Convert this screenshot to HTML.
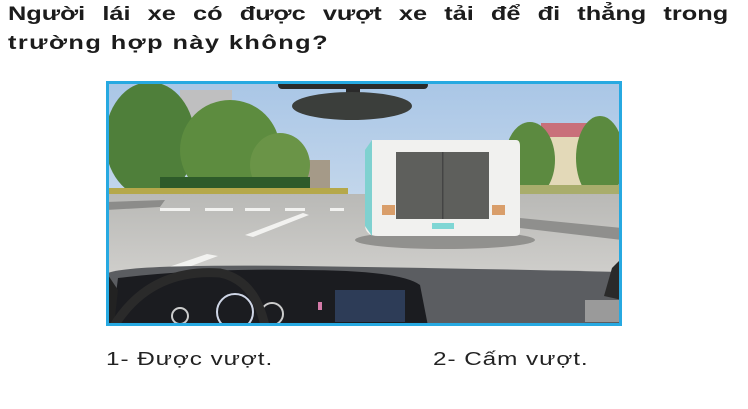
<!DOCTYPE html>
<html><head><meta charset="utf-8"><style>
html,body{margin:0;padding:0;background:#fff;width:748px;height:409px;overflow:hidden;position:relative}
.t{position:absolute;left:8px;font-family:"Liberation Sans",sans-serif;font-weight:bold;font-size:19.5px;color:#1c1c1c;white-space:nowrap;transform:scaleX(1.3);transform-origin:0 0}
.l1{top:3px;width:554px;text-align:justify;text-align-last:justify;white-space:normal}
.l2{top:32px;letter-spacing:1.1px}
.o{position:absolute;top:349px;font-family:"Liberation Sans",sans-serif;font-size:18px;color:#222;transform:scaleX(1.35);transform-origin:0 0;white-space:nowrap;letter-spacing:0.7px}
svg{position:absolute;left:106px;top:81px}
</style></head><body>
<div class="t l1">Người lái xe có được vượt xe tải để đi thẳng trong</div>
<div class="t l2">trường hợp này không?</div>
<svg width="516" height="245" viewBox="106 81 516 245">
<defs>
<linearGradient id="sky" x1="0" y1="0" x2="0" y2="1"><stop offset="0" stop-color="#a9c6e6"/><stop offset="1" stop-color="#dfe8f1"/></linearGradient>
<linearGradient id="road" x1="0" y1="0" x2="0" y2="1"><stop offset="0" stop-color="#b9b9b6"/><stop offset="1" stop-color="#cfcecb"/></linearGradient>
</defs>
<rect x="106" y="81" width="516" height="245" fill="url(#sky)"/>
<rect x="180" y="90" width="52" height="80" fill="#bfbfc0"/>
<rect x="305" y="160" width="25" height="35" fill="#a59a88"/>
<ellipse cx="150" cy="140" rx="45" ry="58" fill="#4f7f3a"/>
<ellipse cx="230" cy="150" rx="50" ry="50" fill="#5d8c3f"/>
<ellipse cx="280" cy="165" rx="30" ry="32" fill="#6a9447"/>
<rect x="160" y="177" width="150" height="18" fill="#2e5b2a"/>
<rect x="108" y="188" width="240" height="8" fill="#b5a84a"/>
<rect x="545" y="128" width="40" height="62" fill="#e3d9b8"/>
<rect x="541" y="123" width="46" height="14" fill="#c9707a"/>
<ellipse cx="530" cy="160" rx="25" ry="38" fill="#5c8a40"/>
<ellipse cx="600" cy="158" rx="24" ry="42" fill="#5b8a3f"/>
<rect x="510" y="185" width="112" height="10" fill="#a9ad6c"/>
<rect x="106" y="194" width="516" height="80" fill="url(#road)"/>
<polygon points="106,202 165,200 160,207 106,210" fill="#8c8c8a"/>
<polygon points="520,218 622,228 622,240 520,228" fill="#8f8f8d"/>
<g fill="#f2f2f0"><rect x="160" y="208" width="30" height="3"/><rect x="205" y="208" width="28" height="3"/><rect x="245" y="208" width="25" height="3"/><rect x="285" y="208" width="20" height="3"/><rect x="330" y="208" width="14" height="3"/>
<polygon points="245,235 303,213 309,215 253,237"/><polygon points="160,270 207,254 218,256 175,272"/></g>
<ellipse cx="445" cy="240" rx="90" ry="9" fill="#7a7a78" opacity="0.7"/>
<path d="M372 140 L516 140 Q520 140 520 146 L520 232 Q520 236 515 236 L378 236 Q366 236 365 226 L365 160 Z" fill="#f1f1ef"/>
<path d="M365 150 L372 140 L372 236 L365 226Z" fill="#7fd1d0"/>
<rect x="396" y="152" width="93" height="67" fill="#5e5f5c"/>
<rect x="442" y="152" width="1.5" height="67" fill="#444"/>
<rect x="382" y="205" width="13" height="10" fill="#d99e6a"/>
<rect x="492" y="205" width="13" height="10" fill="#d99e6a"/>
<rect x="432" y="223" width="22" height="6" fill="#7fd6d4"/>
<rect x="278" y="81" width="150" height="8" rx="4" fill="#2a2a2a"/>
<rect x="346" y="86" width="14" height="8" fill="#2a2a2a"/>
<ellipse cx="352" cy="106" rx="60" ry="14" fill="#3b3e3b"/>
<path d="M106 274 Q120 264 300 266 Q450 268 622 272 L622 326 L106 326Z" fill="#5b5d61"/>
<path d="M112 326 L118 278 Q200 268 300 270 Q400 270 420 285 L428 326Z" fill="#1b1c20"/>
<path d="M106 326 L106 272 L118 290 L114 326Z" fill="#222"/>
<path d="M612 268 L622 258 L622 300 L604 296Z" fill="#2a2a2a"/>
<circle cx="235" cy="312" r="18" fill="none" stroke="#cfd6e6" stroke-width="2"/>
<circle cx="180" cy="316" r="8" fill="none" stroke="#ccc" stroke-width="2"/>
<circle cx="272" cy="314" r="11" fill="none" stroke="#ccc" stroke-width="2"/>
<rect x="335" y="290" width="70" height="32" fill="#2d3c57"/>
<rect x="318" y="302" width="4" height="8" fill="#d47aa8"/>
<path d="M114 326 Q150 268 220 273 Q255 280 265 326" fill="none" stroke="#2a2a2a" stroke-width="9"/>
<rect x="585" y="300" width="35" height="22" fill="#9a9a9a"/>
<rect x="107.5" y="82.5" width="513" height="242" fill="none" stroke="#27a9e1" stroke-width="3"/>
</svg>
<div class="o" style="left:106px">1- Được vượt.</div>
<div class="o" style="left:433px">2- Cấm vượt.</div>
</body></html>
